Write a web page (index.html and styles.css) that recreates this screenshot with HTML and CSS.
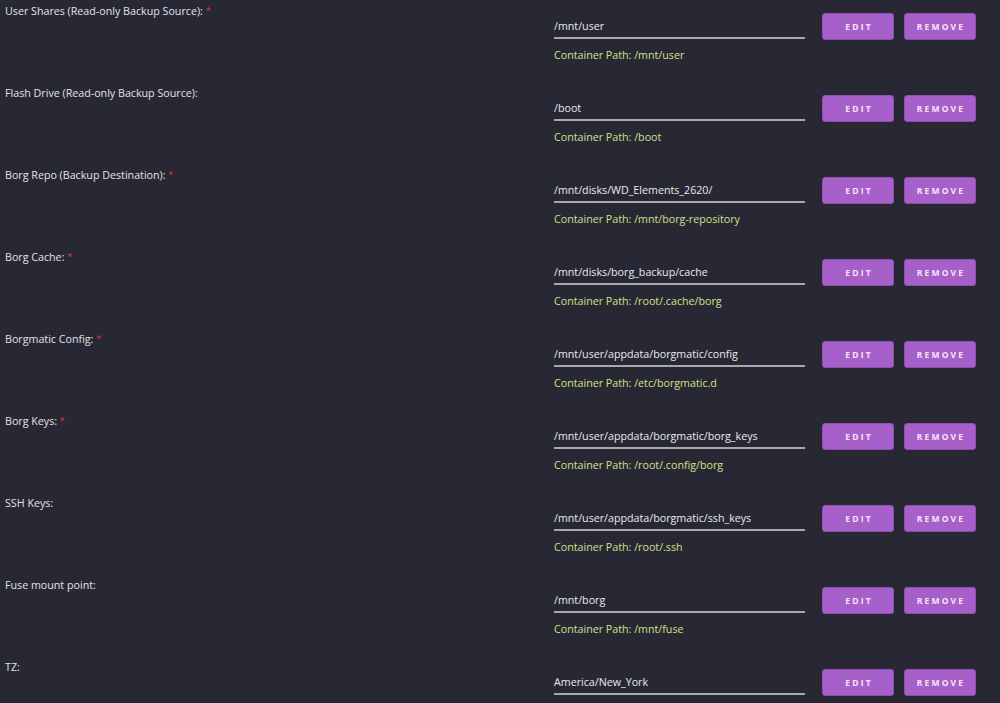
FILE: index.html
```html
<!DOCTYPE html>
<html>
<head>
<meta charset="utf-8">
<link rel="stylesheet" href="styles.css">
</head>
<body>
<div class="list">
  <div class="row">
    <div class="label">User Shares (Read-only Backup Source): <span class="req">*</span></div>
    <div class="field"><div class="input">/mnt/user</div><div class="hint">Container Path: /mnt/user</div></div>
    <div class="actions"><button class="btn">EDIT</button><button class="btn">REMOVE</button></div>
  </div>
  <div class="row">
    <div class="label">Flash Drive (Read-only Backup Source):</div>
    <div class="field"><div class="input">/boot</div><div class="hint">Container Path: /boot</div></div>
    <div class="actions"><button class="btn">EDIT</button><button class="btn">REMOVE</button></div>
  </div>
  <div class="row">
    <div class="label">Borg Repo (Backup Destination): <span class="req">*</span></div>
    <div class="field"><div class="input">/mnt/disks/WD_Elements_2620/</div><div class="hint">Container Path: /mnt/borg-repository</div></div>
    <div class="actions"><button class="btn">EDIT</button><button class="btn">REMOVE</button></div>
  </div>
  <div class="row">
    <div class="label">Borg Cache: <span class="req">*</span></div>
    <div class="field"><div class="input">/mnt/disks/borg_backup/cache</div><div class="hint">Container Path: /root/.cache/borg</div></div>
    <div class="actions"><button class="btn">EDIT</button><button class="btn">REMOVE</button></div>
  </div>
  <div class="row">
    <div class="label">Borgmatic Config: <span class="req">*</span></div>
    <div class="field"><div class="input">/mnt/user/appdata/borgmatic/config</div><div class="hint">Container Path: /etc/borgmatic.d</div></div>
    <div class="actions"><button class="btn">EDIT</button><button class="btn">REMOVE</button></div>
  </div>
  <div class="row">
    <div class="label">Borg Keys: <span class="req">*</span></div>
    <div class="field"><div class="input">/mnt/user/appdata/borgmatic/borg_keys</div><div class="hint">Container Path: /root/.config/borg</div></div>
    <div class="actions"><button class="btn">EDIT</button><button class="btn">REMOVE</button></div>
  </div>
  <div class="row">
    <div class="label">SSH Keys:</div>
    <div class="field"><div class="input">/mnt/user/appdata/borgmatic/ssh_keys</div><div class="hint">Container Path: /root/.ssh</div></div>
    <div class="actions"><button class="btn">EDIT</button><button class="btn">REMOVE</button></div>
  </div>
  <div class="row">
    <div class="label">Fuse mount point:</div>
    <div class="field"><div class="input">/mnt/borg</div><div class="hint">Container Path: /mnt/fuse</div></div>
    <div class="actions"><button class="btn">EDIT</button><button class="btn">REMOVE</button></div>
  </div>
  <div class="row">
    <div class="label">TZ:</div>
    <div class="field"><div class="input">America/New_York</div></div>
    <div class="actions"><button class="btn">EDIT</button><button class="btn">REMOVE</button></div>
  </div>
</div>
</body>
</html>
```
FILE: styles.css
```css
html, body {
  margin: 0;
  padding: 0;
  background: #282834;
  height: 100%;
  overflow: hidden;
}
body {
  font-family: "Open Sans", "Noto Sans", sans-serif;
  font-size: 10.7px;
  color: #e2e2e6;
}
.list {
  display: flex;
  flex-direction: column;
}
.row {
  display: flex;
  height: 82px;
  flex-shrink: 0;
}
.label {
  width: 549px;
  padding-left: 5px;
  padding-top: 3px;
  line-height: 16px;
}
.req {
  color: #e03a3a;
  font-size: 9px;
  vertical-align: top;
}
.field {
  width: 251px;
  display: flex;
  flex-direction: column;
  padding-top: 18px;
}
.input {
  line-height: 16px;
  padding-bottom: 3px;
  border-bottom: 2px solid #a8a8ad;
  color: #e8e8ec;
}
.hint {
  margin-top: 8px;
  line-height: 16px;
  color: #cfe08a;
}
.actions {
  display: flex;
  gap: 10px;
  margin-left: 17px;
  padding-top: 13px;
  align-items: flex-start;
}
.btn {
  width: 72px;
  height: 27px;
  padding: 0;
  border: 1px solid #8f4fb0;
  border-radius: 3px;
  background: #a760c9;
  color: #f3e6f8;
  font-family: "Open Sans", sans-serif;
  font-weight: 700;
  font-size: 8.5px;
  letter-spacing: 2.2px;
  text-indent: 2px;
}
```
